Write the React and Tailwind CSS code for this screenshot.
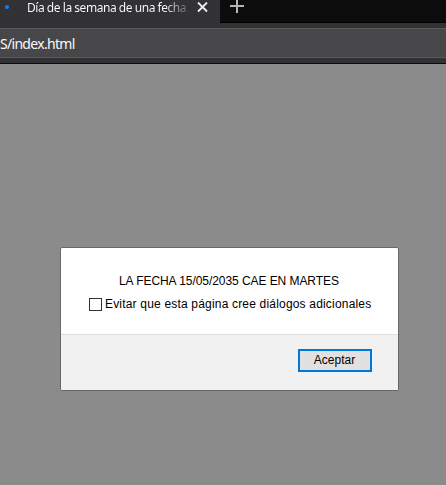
function Tab() {
  return (
    <div className="flex h-[23px] w-[220px] shrink-0 bg-[#323234]">
      <span className="mt-[5px] ml-[5px] size-1 shrink-0 rounded-full bg-[#0a84ff]" />
      <span className="ml-[18px] h-4 w-[167px] shrink-0 overflow-hidden whitespace-nowrap bg-linear-to-r from-white from-82% to-transparent bg-clip-text font-['Noto_Sans',sans-serif] text-[12px] leading-4 tracking-[-0.46px] text-transparent">
        Día de la semana de una fecha
      </span>
      <svg className="mt-[2px] ml-[3px] size-[11px] shrink-0" viewBox="0 0 11 11" fill="none" stroke="#f0f0f0" strokeWidth="1.8">
        <path d="M1 0.5 10 9.5M10 0.5 1 9.5" />
      </svg>
    </div>
  );
}

function Browser({ children }) {
  return (
    <div className="flex h-[485px] w-[446px] flex-col overflow-hidden bg-[#8b8b8b]">
      <div className="flex h-[23px] shrink-0 bg-[#0c0c0d]">
        <Tab />
        <div className="flex-1 border-b border-black pl-[10px]">
          <svg className="h-[13px] w-[14px]" viewBox="0 0 14 13" fill="none" stroke="#b5b5b6" strokeWidth="2">
            <path d="M0 6H14M7 0V13" />
          </svg>
        </div>
      </div>
      <div className="h-[41px] shrink-0 border-b border-[#0c0c0d] bg-[#323234] pt-[5px]">
        <div className="h-[30px] border-y border-[#5a5a5c] bg-[#474749] font-['Noto_Sans',sans-serif] text-[14px] leading-[30px] tracking-[-0.7px] text-[#f9f9fa]">
          S/index.html
        </div>
      </div>
      {children}
    </div>
  );
}

function AlertDialog() {
  return (
    <div className="mt-[183px] ml-[60px] flex h-[144px] w-[339px] flex-col overflow-hidden rounded-[2px] border border-[#68686a] bg-white font-['Liberation_Sans',Arial,sans-serif] text-[12px] text-black">
      <div className="h-[86px] shrink-0 pt-[25px]">
        <p className="ml-[58px] h-4 w-fit whitespace-nowrap leading-4 tracking-[-0.06px]">LA FECHA 15/05/2035 CAE EN MARTES</p>
        <label className="mt-[7px] ml-[28px] flex h-4 items-center whitespace-nowrap leading-4">
          <input type="checkbox" className="size-[13px] shrink-0 appearance-none border border-[#333] bg-white" />
          <span className="ml-[3px] tracking-[0.185px]">Evitar que esta página cree diálogos adicionales</span>
        </label>
      </div>
      <div className="flex flex-1 items-start justify-end border-t border-[#dfdfdf] bg-[#f1f1f1] pt-[14px] pr-[26px]">
        <button className="h-[23px] w-[74px] border-2 border-[#0078d7] bg-[#e1e1e1] pr-px pb-px leading-[18px]">Aceptar</button>
      </div>
    </div>
  );
}

export default function App() {
  return (
    <Browser>
      <AlertDialog />
    </Browser>
  );
}
